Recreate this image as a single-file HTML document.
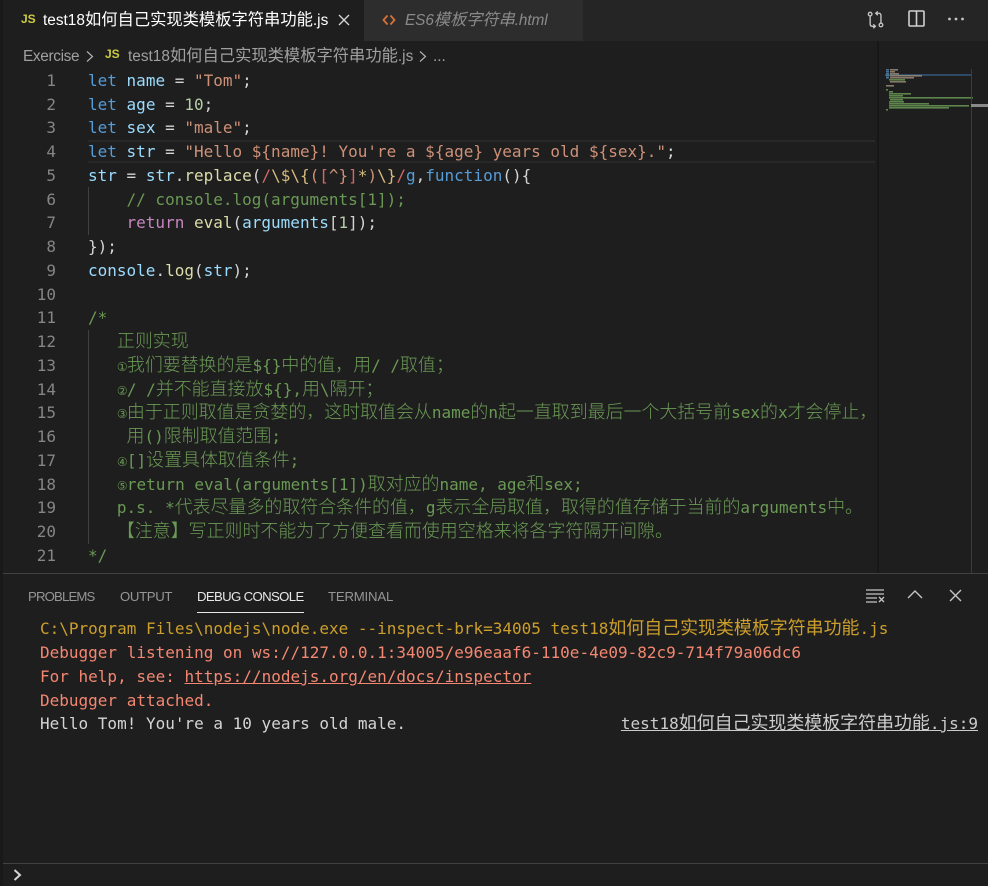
<!DOCTYPE html>
<html><head><meta charset="utf-8">
<style>
*{margin:0;padding:0;box-sizing:border-box}
html,body{width:988px;height:886px;overflow:hidden;background:#1e1e1e}
body{position:relative;font-family:"DejaVu Sans Mono","Liberation Mono","Noto Sans CJK SC",monospace;font-size:16px;color:#d4d4d4}
.a{position:absolute}
.l{position:absolute;left:88px;white-space:pre;height:24px;line-height:24px;margin-top:1px}
.n{position:absolute;left:20px;width:36px;text-align:right;color:#858585;height:24px;line-height:24px;margin-top:1px}
.k{color:#569cd6}.v{color:#9cdcfe}.s{color:#ce9178}.d{color:#b5cea8}.f{color:#dcdcaa}.r{color:#d16969}.e{color:#d7ba7d}.c{color:#6a9955}.p{color:#c586c0}
i{font-style:normal;font-size:17.95px;line-height:16px;font-family:"Noto Sans CJK SC",sans-serif;font-weight:300}
b{font-weight:400;display:inline-block;width:10px;line-height:16px;font-size:12px;font-family:"DejaVu Sans",sans-serif;text-align:center;overflow:visible}
.ui{font-family:"Liberation Sans","Noto Sans CJK SC",sans-serif;white-space:pre}
.ui i{font-size:16.3px;font-weight:400}
.pt{position:absolute;top:588px;font:13.2px/18px "Liberation Sans",sans-serif;color:#969696;white-space:pre}
.t{position:absolute;left:40px;white-space:pre;height:24px;line-height:24px;margin-top:1px}
.t i{font-weight:400}
.y{color:#cc9f2c}.o{color:#f48771}
</style></head><body>
<div class="a" style="left:0;top:0;width:988px;height:41px;background:#252526"></div>
<div class="a" style="left:0;top:0;width:364px;height:41px;background:#1e1e1e"></div>
<div class="a" style="left:364px;top:0;width:219px;height:41px;background:#2d2d2d"></div>
<div class="a" style="left:0;top:0;width:3px;height:886px;background:#191919"></div>

<div class="a ui" style="left:21px;top:10px;font-size:12px;line-height:18px;font-weight:700;color:#cbcb41">JS</div>
<div class="a ui" style="left:43px;top:9px;font-size:15.4px;line-height:24px;color:#fff">test18<i>如何自己实现类模板字符串功能</i>.js</div>
<svg class="a" style="left:337px;top:13px" width="14" height="14" viewBox="0 0 14 14"><path d="M2 2L12 12M12 2L2 12" stroke="#d8d8d8" stroke-width="1.3" fill="none"/></svg>
<svg class="a" style="left:382px;top:13px" width="14" height="14" viewBox="0 0 14 14"><path d="M5.5 2.5L1.5 7l4 4.5M8.5 2.5l4 4.5-4 4.5" stroke="#d9703a" stroke-width="1.8" fill="none"/></svg>
<div class="a ui" style="left:405px;top:9px;font-size:15.4px;line-height:24px;font-style:italic;color:#8a8a8a;letter-spacing:-.1px">ES6<i style="font-style:italic">模板字符串</i>.html</div>

<svg class="a" style="left:867px;top:11px" width="18" height="18" viewBox="0 0 20 20" fill="none" stroke="#c5c5c5" stroke-width="1.5"><circle cx="3.5" cy="3.5" r="2"/><circle cx="15.5" cy="15.5" r="2"/><path d="M3.5 5.5V14.5Q3.5 17 6 17H9M7 14.8L9.3 17L7 19.2M15.5 13.5V5Q15.5 2.5 13 2.5H10M12 .5L9.7 2.5L12 4.7"/></svg>
<svg class="a" style="left:908px;top:10px" width="17" height="17" viewBox="0 0 17 17" fill="none" stroke="#d0d0d0" stroke-width="1.6"><rect x="1" y="1" width="15" height="15" rx="1"/><path d="M8.5 1V16"/></svg>
<svg class="a" style="left:947px;top:16px" width="18" height="6" viewBox="0 0 18 6" fill="#c5c5c5"><circle cx="2.5" cy="3" r="1.4"/><circle cx="9" cy="3" r="1.4"/><circle cx="15.5" cy="3" r="1.4"/></svg>

<div class="a ui" style="left:23px;top:45px;font-size:15.4px;line-height:24px;color:#a0a0a0;letter-spacing:-.35px">Exercise</div>
<svg class="a" style="left:85px;top:50px" width="10" height="13" viewBox="0 0 10 13"><path d="M2 1.5L7.5 6.5L2 11.5" stroke="#b0b0b0" stroke-width="1.2" fill="none"/></svg>
<div class="a ui" style="left:105px;top:45px;font-size:12px;line-height:18px;font-weight:700;color:#cbcb41">JS</div>
<div class="a ui" style="left:128px;top:45px;font-size:15.4px;line-height:24px;color:#a0a0a0">test18<i>如何自己实现类模板字符串功能</i>.js</div>
<svg class="a" style="left:418px;top:50px" width="10" height="13" viewBox="0 0 10 13"><path d="M2 1.5L7.5 6.5L2 11.5" stroke="#b0b0b0" stroke-width="1.2" fill="none"/></svg>
<div class="a ui" style="left:433px;top:45px;font-size:15.4px;line-height:24px;color:#a0a0a0">...</div>

<!-- current line -->
<div class="a" style="left:88px;top:140px;width:787px;height:23px;border:2px solid #282828;border-left:0;border-right:0"></div>
<!-- guides -->
<div class="a" style="left:88px;top:187px;width:1px;height:48px;background:#404040"></div>
<div class="a" style="left:88px;top:330px;width:1px;height:214px;background:#404040"></div>

<div class="n" style="top:68px">1</div><div class="l" style="top:68px"><span class="k">let</span> <span class="v">name</span> = <span class="s">"Tom"</span>;</div>
<div class="n" style="top:92px">2</div><div class="l" style="top:92px"><span class="k">let</span> <span class="v">age</span> = <span class="d">10</span>;</div>
<div class="n" style="top:115px">3</div><div class="l" style="top:115px"><span class="k">let</span> <span class="v">sex</span> = <span class="s">"male"</span>;</div>
<div class="n" style="top:139px">4</div><div class="l" style="top:139px"><span class="k">let</span> <span class="v">str</span> = <span class="s">"Hello ${name}! You're a ${age} years old ${sex}."</span>;</div>
<div class="n" style="top:163px">5</div><div class="l" style="top:163px"><span class="v">str</span> = <span class="v">str</span>.<span class="f">replace</span>(<span class="r">/</span><span class="e">\$\{</span><span class="s">(</span><span class="r">[</span><span class="s">^}</span><span class="r">]</span><span class="e">*</span><span class="s">)</span><span class="e">\}</span><span class="r">/</span><span class="k">g</span>,<span class="k">function</span>(){</div>
<div class="n" style="top:187px">6</div><div class="l c" style="top:187px">    // console.log(arguments[1]);</div>
<div class="n" style="top:210px">7</div><div class="l" style="top:210px">    <span class="p">return</span> <span class="f">eval</span>(<span class="v">arguments</span>[<span class="d">1</span>]);</div>
<div class="n" style="top:234px">8</div><div class="l" style="top:234px">});</div>
<div class="n" style="top:258px">9</div><div class="l" style="top:258px"><span class="v">console</span>.<span class="f">log</span>(<span class="v">str</span>);</div>
<div class="n" style="top:282px">10</div>
<div class="n" style="top:305px">11</div><div class="l c" style="top:305px">/*</div>
<div class="n" style="top:329px">12</div><div class="l c" style="top:329px">   <i>正则实现</i></div>
<div class="n" style="top:353px">13</div><div class="l c" style="top:353px">   <b>①</b><i>我们要替换的是</i>${}<i>中的值，用</i>/ /<i>取值；</i></div>
<div class="n" style="top:377px">14</div><div class="l c" style="top:377px">   <b>②</b>/ /<i>并不能直接放</i>${},<i>用</i>\<i>隔开；</i></div>
<div class="n" style="top:400px">15</div><div class="l c" style="top:400px">   <b>③</b><i>由于正则取值是贪婪的，这时取值会从</i>name<i>的</i>n<i>起一直取到最后一个大括号前</i>sex<i>的</i>x<i>才会停止，</i></div>
<div class="n" style="top:424px">16</div><div class="l c" style="top:424px">    <i>用</i>()<i>限制取值范围</i>;</div>
<div class="n" style="top:448px">17</div><div class="l c" style="top:448px">   <b>④</b>[]<i>设置具体取值条件</i>;</div>
<div class="n" style="top:472px">18</div><div class="l c" style="top:472px">   <b>⑤</b>return eval(arguments[1])<i>取对应的</i>name, age<i>和</i>sex;</div>
<div class="n" style="top:495px">19</div><div class="l c" style="top:495px">   p.s. *<i>代表尽量多的取符合条件的值，</i>g<i>表示全局取值，取得的值存储于当前的</i>arguments<i>中。</i></div>
<div class="n" style="top:519px">20</div><div class="l c" style="top:519px">   <i>【注意】写正则时不能为了方便查看而使用空格来将各字符隔开间隙。</i></div>
<div class="n" style="top:543px">21</div><div class="l c" style="top:543px">*/</div>

<!-- minimap -->
<div class="a" style="left:877px;top:41px;width:2px;height:532px;background:#171717"></div>
<svg class="a" style="left:885px;top:68px" width="88" height="46" viewBox="0 0 88 46">
<rect x="0" y="6" width="86" height="2" fill="#2f4a66"/>
<g fill="#4f7fa8" opacity=".85"><rect x="1" y="1" width="3" height="1.6"/><rect x="1" y="3" width="3" height="1.6"/><rect x="1" y="5" width="3" height="1.6"/><rect x="1" y="7" width="3" height="1.6"/><rect x="1" y="9" width="3" height="1.6"/></g>
<g fill="#a0907a" opacity=".8"><rect x="5" y="1" width="8" height="1.6"/><rect x="5" y="3" width="5" height="1.6"/><rect x="5" y="5" width="9" height="1.6"/><rect x="5" y="7" width="32" height="1.6"/><rect x="5" y="9" width="24" height="1.6"/><rect x="5" y="13" width="16" height="1.6"/><rect x="1" y="17" width="8" height="1.6"/></g>
<g fill="#6a9955" opacity=".85"><rect x="4" y="11" width="16" height="1.6"/><rect x="1" y="21" width="2" height="1.6"/><rect x="4" y="23" width="4" height="1.6"/><rect x="4" y="25" width="22" height="1.6"/><rect x="4" y="27" width="14" height="1.6"/><rect x="4" y="29" width="84" height="1.6"/><rect x="5" y="31" width="13" height="1.6"/><rect x="4" y="33" width="15" height="1.6"/><rect x="4" y="35" width="40" height="1.6"/><rect x="4" y="37" width="80" height="1.6"/><rect x="4" y="39" width="60" height="1.6"/><rect x="1" y="41" width="2" height="1.6"/></g>
</svg>
<div class="a" style="left:971px;top:69px;width:1px;height:504px;background:#3c3c3c"></div>
<div class="a" style="left:971px;top:104px;width:17px;height:3px;background:#8a8a8a"></div>

<!-- panel -->
<div class="a" style="left:3px;top:573px;width:985px;height:1px;background:#414141"></div>
<div class="pt" style="left:28px;letter-spacing:-.85px">PROBLEMS</div>
<div class="pt" style="left:120px;letter-spacing:-.35px">OUTPUT</div>
<div class="pt" style="left:197px;color:#e7e7e7;letter-spacing:-.65px">DEBUG CONSOLE</div>
<div class="pt" style="left:328px;letter-spacing:-.2px">TERMINAL</div>
<div class="a" style="left:197px;top:612px;width:107px;height:1px;background:#e7e7e7"></div>
<svg class="a" style="left:866px;top:588px" width="20" height="16" viewBox="0 0 20 16" stroke="#c5c5c5" fill="none" stroke-width="1.3"><path d="M0 2H18M0 6H18M0 10H11M0 14H11M13 9L18 14M18 9L13 14"/></svg>
<svg class="a" style="left:907px;top:589px" width="16" height="12" viewBox="0 0 16 12"><path d="M1 9L8 2L15 9" stroke="#c5c5c5" stroke-width="1.4" fill="none"/></svg>
<svg class="a" style="left:949px;top:589px" width="13" height="13" viewBox="0 0 13 13"><path d="M1 1L12 12M12 1L1 12" stroke="#c5c5c5" stroke-width="1.4" fill="none"/></svg>

<div class="t y" style="top:616px">C:\Program Files\nodejs\node.exe --inspect-brk=34005 test18<i>如何自己实现类模板字符串功能</i>.js</div>
<div class="t o" style="top:640px">Debugger listening on ws://127.0.0.1:34005/e96eaaf6-110e-4e09-82c9-714f79a06dc6</div>
<div class="t o" style="top:664px">For help, see: <span style="text-decoration:underline">https://nodejs.org/en/docs/inspector</span></div>
<div class="t o" style="top:688px">Debugger attached.</div>
<div class="t" style="top:711px">Hello Tom! You're a 10 years old male.</div>
<div class="t" style="left:auto;right:10px;top:711px;text-decoration:underline;color:#cccccc">test18<i>如何自己实现类模板字符串功能</i>.js:9</div>

<div class="a" style="left:3px;top:863px;width:985px;height:1px;background:#414141"></div>
<svg class="a" style="left:12px;top:868px" width="12" height="14" viewBox="0 0 12 14"><path d="M2.5 2L8 7L2.5 12" stroke="#d4d4d4" stroke-width="2" fill="none"/></svg>
</body></html>
